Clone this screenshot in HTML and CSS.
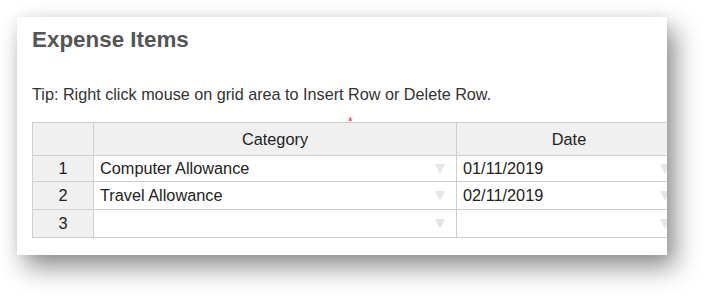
FILE: index.html
```html
<!DOCTYPE html>
<html lang="en">
<head>
  <meta charset="UTF-8" />
  <title>Expense Items</title>
  <link rel="stylesheet" href="styles.css">
</head>
<body>
  <div class="panel">
    <h2>Expense Items</h2>
    <p class="tip">Tip: Right click mouse on grid area to Insert Row or Delete Row.</p>

    <div class="grid-wrap">
      <span class="required">*</span>
      <table class="grid">
        <colgroup>
          <col class="col-num">
          <col class="col-cat">
          <col class="col-date">
        </colgroup>
        <thead>
          <tr>
            <th></th>
            <th>Category</th>
            <th>Date</th>
          </tr>
        </thead>
        <tbody>
          <tr class="first">
            <td class="num">1</td>
            <td><div class="cell">Computer Allowance<span class="arrow"></span></div></td>
            <td><div class="cell">01/11/2019<span class="arrow"></span></div></td>
          </tr>
          <tr>
            <td class="num">2</td>
            <td><div class="cell">Travel Allowance<span class="arrow"></span></div></td>
            <td><div class="cell">02/11/2019<span class="arrow"></span></div></td>
          </tr>
          <tr>
            <td class="num">3</td>
            <td><div class="cell"><span class="arrow"></span></div></td>
            <td><div class="cell"><span class="arrow"></span></div></td>
          </tr>
        </tbody>
      </table>
    </div>
  </div>
</body>
</html>
```

FILE: styles.css
```css
:root {
  --text: #222;
  --title: #555;
  --line: #cfcfcf;
  --head-bg: #f0f0f0;
  --arrow: #e6e6e6;
}

* {
  box-sizing: border-box;
}

html, body {
  height: 100%;
}

body {
  margin: 0;
  padding: 17px 0 0 17px;
  background-color: #fff;
  font-family: "Liberation Sans", Arial, sans-serif;
  color: var(--text);
}

.panel {
  width: 650px;
  height: 238px;
  padding: 10px 0 0 15px;
  background-color: #fff;
  overflow: hidden;
  box-shadow: 0 0 10px rgba(0,0,0,0.06), 8px 12px 24px rgba(0,0,0,0.45);
}

h2 {
  margin: 0;
  font-size: 22.4px;
  line-height: 25px;
  font-weight: bold;
  color: var(--title);
}

.tip {
  margin: 33px 0 0;
  font-size: 16.2px;
  line-height: 18px;
  color: #333;
}

.grid-wrap {
  position: relative;
  margin-top: 19px;
  width: 650px;
}

.required {
  position: absolute;
  left: 316px;
  top: -6px;
  font-size: 12px;
  line-height: 12px;
  color: #f01e3c;
}

.grid {
  border-collapse: collapse;
  table-layout: fixed;
  width: 650px;
  font-size: 16.3px;
}

.col-num { width: 61px; }
.col-cat { width: 363px; }
.col-date { width: 225px; }

.grid th,
.grid td {
  border: 1px solid var(--line);
  padding: 0 6px;
  white-space: nowrap;
  overflow: hidden;
}

.grid th {
  height: 33px;
  background-color: var(--head-bg);
  font-weight: normal;
  text-align: center;
}

.grid td {
  height: 28px;
}

.grid tr.first td {
  height: 26px;
}

.grid td.num {
  background-color: var(--head-bg);
  text-align: center;
}

.cell {
  display: flex;
  align-items: center;
  justify-content: space-between;
}

.arrow {
  margin-left: auto;
  margin-right: 5px;
  width: 0;
  height: 0;
  border-left: 5.5px solid transparent;
  border-right: 5.5px solid transparent;
  border-top: 10px solid var(--arrow);
}
```
